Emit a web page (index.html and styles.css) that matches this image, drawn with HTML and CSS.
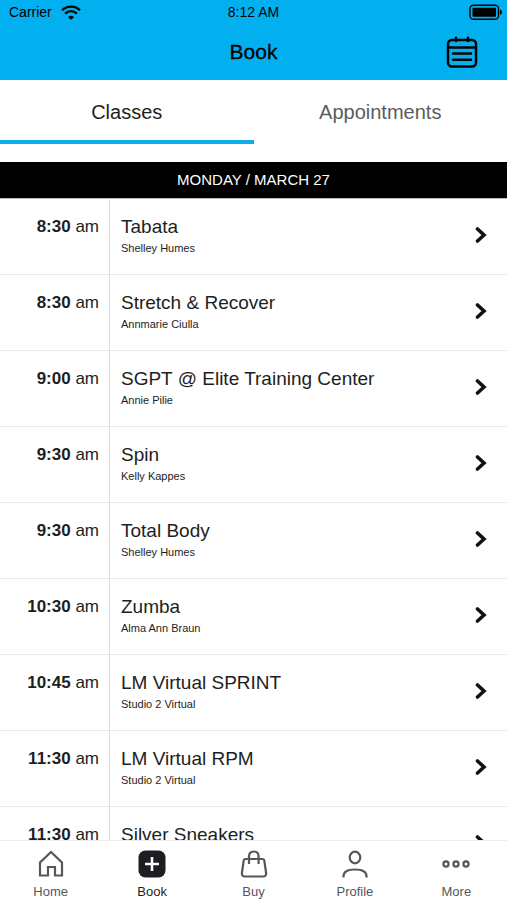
FILE: index.html
```html
<!DOCTYPE html>
<html lang="en">
<head>
<meta charset="utf-8">
<meta name="viewport" content="width=device-width, initial-scale=1">
<title>Book</title>
<link rel="stylesheet" href="styles.css">
</head>
<body>
<svg class="defs" aria-hidden="true">
  <symbol id="chevron" viewBox="0 0 12 18"><path d="M2.500 3l6.500 6-6.500 6" fill="none" stroke="#111" stroke-width="3.600" stroke-linecap="round"/></symbol>
</svg>
<header class="top">
  <div class="status">
    <span class="carrier">Carrier
      <svg width="20" height="15" viewBox="0 0 20 15" aria-hidden="true"><g fill="none" stroke="#000" stroke-width="2.300"><path d="M1 5.300a12.700 12.700 0 0 1 18 0"/><path d="M4.200 8.600a8.200 8.200 0 0 1 11.600 0"/></g><path d="M7.500 11.600q2.500-1.800 5 0 .5 1.200-2.500 3.200-3-2-2.500-3.200z"/></svg>
    </span>
    <span>8:12 AM</span>
    <svg class="battery" width="34" height="17" viewBox="0 0 34 17" aria-hidden="true"><rect x="1" y="1.200" width="28.500" height="14" rx="3.500" fill="none" stroke="#000" stroke-width="1.400"/><rect x="3.500" y="3.700" width="23.500" height="9" rx="1"/><path d="M31 5.500q2 .8 2 2.700t-2 2.700z"/></svg>
  </div>
  <div class="bar">
    <h1>Book</h1>
    <button class="calendar" type="button" aria-label="Calendar">
      <svg width="32" height="32" viewBox="0 0 32 32" fill="none" stroke="#000" stroke-width="2.500" stroke-linecap="round" aria-hidden="true"><rect x="2" y="4" width="28" height="26.500" rx="4"/><path d="M2.500 11.500h27M10 1.800V5M22 1.800V5M7 17.500h18M7 23.800h18"/></svg>
    </button>
  </div>
</header>
<nav class="tabs" aria-label="Booking type">
  <button type="button" class="tab active">Classes</button>
  <button type="button" class="tab">Appointments</button>
</nav>
<main class="schedule">
  <h2>MONDAY / MARCH 27</h2>
  <ul>
    <li><a href="#"><span class="time"><b>8:30</b> am</span><span class="info"><span class="name">Tabata</span><span class="staff">Shelley Humes</span></span><svg class="go" aria-hidden="true"><use href="#chevron"/></svg></a></li>
    <li><a href="#"><span class="time"><b>8:30</b> am</span><span class="info"><span class="name">Stretch &amp; Recover</span><span class="staff">Annmarie Ciulla</span></span><svg class="go" aria-hidden="true"><use href="#chevron"/></svg></a></li>
    <li><a href="#"><span class="time"><b>9:00</b> am</span><span class="info"><span class="name">SGPT @ Elite Training Center</span><span class="staff">Annie Pilie</span></span><svg class="go" aria-hidden="true"><use href="#chevron"/></svg></a></li>
    <li><a href="#"><span class="time"><b>9:30</b> am</span><span class="info"><span class="name">Spin</span><span class="staff">Kelly Kappes</span></span><svg class="go" aria-hidden="true"><use href="#chevron"/></svg></a></li>
    <li><a href="#"><span class="time"><b>9:30</b> am</span><span class="info"><span class="name">Total Body</span><span class="staff">Shelley Humes</span></span><svg class="go" aria-hidden="true"><use href="#chevron"/></svg></a></li>
    <li><a href="#"><span class="time"><b>10:30</b> am</span><span class="info"><span class="name">Zumba</span><span class="staff">Alma Ann Braun</span></span><svg class="go" aria-hidden="true"><use href="#chevron"/></svg></a></li>
    <li><a href="#"><span class="time"><b>10:45</b> am</span><span class="info"><span class="name">LM Virtual SPRINT</span><span class="staff">Studio 2 Virtual</span></span><svg class="go" aria-hidden="true"><use href="#chevron"/></svg></a></li>
    <li><a href="#"><span class="time"><b>11:30</b> am</span><span class="info"><span class="name">LM Virtual RPM</span><span class="staff">Studio 2 Virtual</span></span><svg class="go" aria-hidden="true"><use href="#chevron"/></svg></a></li>
    <li><a href="#"><span class="time"><b>11:30</b> am</span><span class="info"><span class="name">Silver Sneakers</span></span><svg class="go" aria-hidden="true"><use href="#chevron"/></svg></a></li>
  </ul>
</main>
<nav class="dock" aria-label="Main">
  <a href="#"><svg viewBox="0 0 28 28" aria-hidden="true"><path d="M3 25.500V12.500L14 2l11 10.500v13h-7v-8.500h-7v8.500z"/></svg>Home</a>
  <a href="#" class="current" aria-current="page"><svg viewBox="0 0 28 28" aria-hidden="true"><rect x=".5" y=".5" width="27" height="27" rx="7" fill="#1d1e22" stroke="none"/><path d="M14 7v14M7 14h14" stroke="#fff" stroke-width="2.600"/></svg>Book</a>
  <a href="#"><svg viewBox="0 0 28 28" aria-hidden="true"><path d="M5.500 9h17q1.500 0 1.800 1.500l1.800 12.500q.3 3.500-3 3.500H4.900q-3.300 0-3-3.500l1.800-12.500Q4 9 5.500 9zM9 14V6.500Q9 1.500 13.800 1.500t4.800 5V14"/></svg>Buy</a>
  <a href="#"><svg viewBox="0 0 28 28" aria-hidden="true"><ellipse cx="14" cy="7.500" rx="5.300" ry="5.800"/><path d="M2.500 27.500v-1.300C2.500 22 6 19.500 14 19.500s11.500 2.500 11.500 6.700v1.300"/></svg>Profile</a>
  <a href="#"><svg viewBox="0 0 28 28" aria-hidden="true"><circle cx="4" cy="14" r="2.600"/><circle cx="14" cy="14" r="2.600"/><circle cx="24" cy="14" r="2.600"/></svg>More</a>
</nav>
</body>
</html>
```
FILE: styles.css
```css
* { box-sizing: border-box; }

body {
  display: flex;
  flex-direction: column;
  height: 100vh;
  margin: 0;
  background: #fff;
  color: #1d1e22;
  font-family: "Liberation Sans", Arial, sans-serif;
}

button {
  padding: 0;
  border: 0;
  background: none;
  color: inherit;
  font: inherit;
}

a { color: inherit; text-decoration: none; }
svg { display: block; flex: none; }
.defs { position: absolute; width: 0; height: 0; }

.top { background: #02b0f0; color: #000; }

.status {
  display: grid;
  grid-template-columns: 1fr auto 1fr;
  align-items: center;
  height: 24px;
  padding: 0 4px;
  font-size: 14px;
}

.carrier { display: flex; align-items: center; gap: 9px; padding-left: 5px; }
.battery { justify-self: end; }

.bar {
  display: grid;
  grid-template-columns: 1fr auto 1fr;
  align-items: center;
  height: 56px;
  padding: 0 29px;
}

h1 { grid-column: 2; margin: 0; font-size: 21px; font-weight: 400; -webkit-text-stroke: 0.3px #000; }
.calendar { justify-self: end; }

.tabs { display: flex; margin-bottom: 18px; font-size: 20px; }

.tab {
  flex: 1;
  height: 64px;
  padding-top: 4px;
  border-bottom: 4px solid transparent;
  color: #5b5c60;
}

.tab.active { border-color: #0daee9; color: #1d1e22; }

.schedule {
  flex: 1;
  min-height: 0;
  overflow-y: auto;
  scrollbar-width: none;
}

h2 {
  margin: 0;
  border-bottom: 1px solid #bbb;
  background: #000;
  color: #fff;
  font-size: 15px;
  font-weight: 400;
  line-height: 36px;
  text-align: center;
}

ul { margin: 0; padding: 0; list-style: none; }

li a {
  display: flex;
  height: 76px;
  padding-right: 20px;
  border-bottom: 1px solid #e9e9e9;
}

.time {
  width: 110px;
  padding: 16px 10px 0 0;
  border-right: 1px solid #dcdcdc;
  font-size: 17px;
  line-height: 24px;
  text-align: right;
}

.info {
  display: flex;
  flex: 1;
  flex-direction: column;
  gap: 1px;
  padding: 16px 11px 0;
}

.name { font-size: 19px; line-height: 24px; }
.staff { font-size: 11px; line-height: 16px; }
.go { align-self: center; width: 12px; height: 18px; margin-bottom: 3px; }

.dock {
  display: flex;
  height: 60px;
  padding-top: 9px;
  border-top: 1px solid #eee;
  color: #55575b;
  font-size: 13px;
  line-height: 16px;
}

.dock a {
  display: flex;
  flex: 1;
  flex-direction: column;
  align-items: center;
  gap: 6px;
}

.dock svg {
  width: 28px;
  height: 28px;
  fill: none;
  stroke: #55575b;
  stroke-width: 2.2;
}

.dock .current { color: #1d1e22; }
```
